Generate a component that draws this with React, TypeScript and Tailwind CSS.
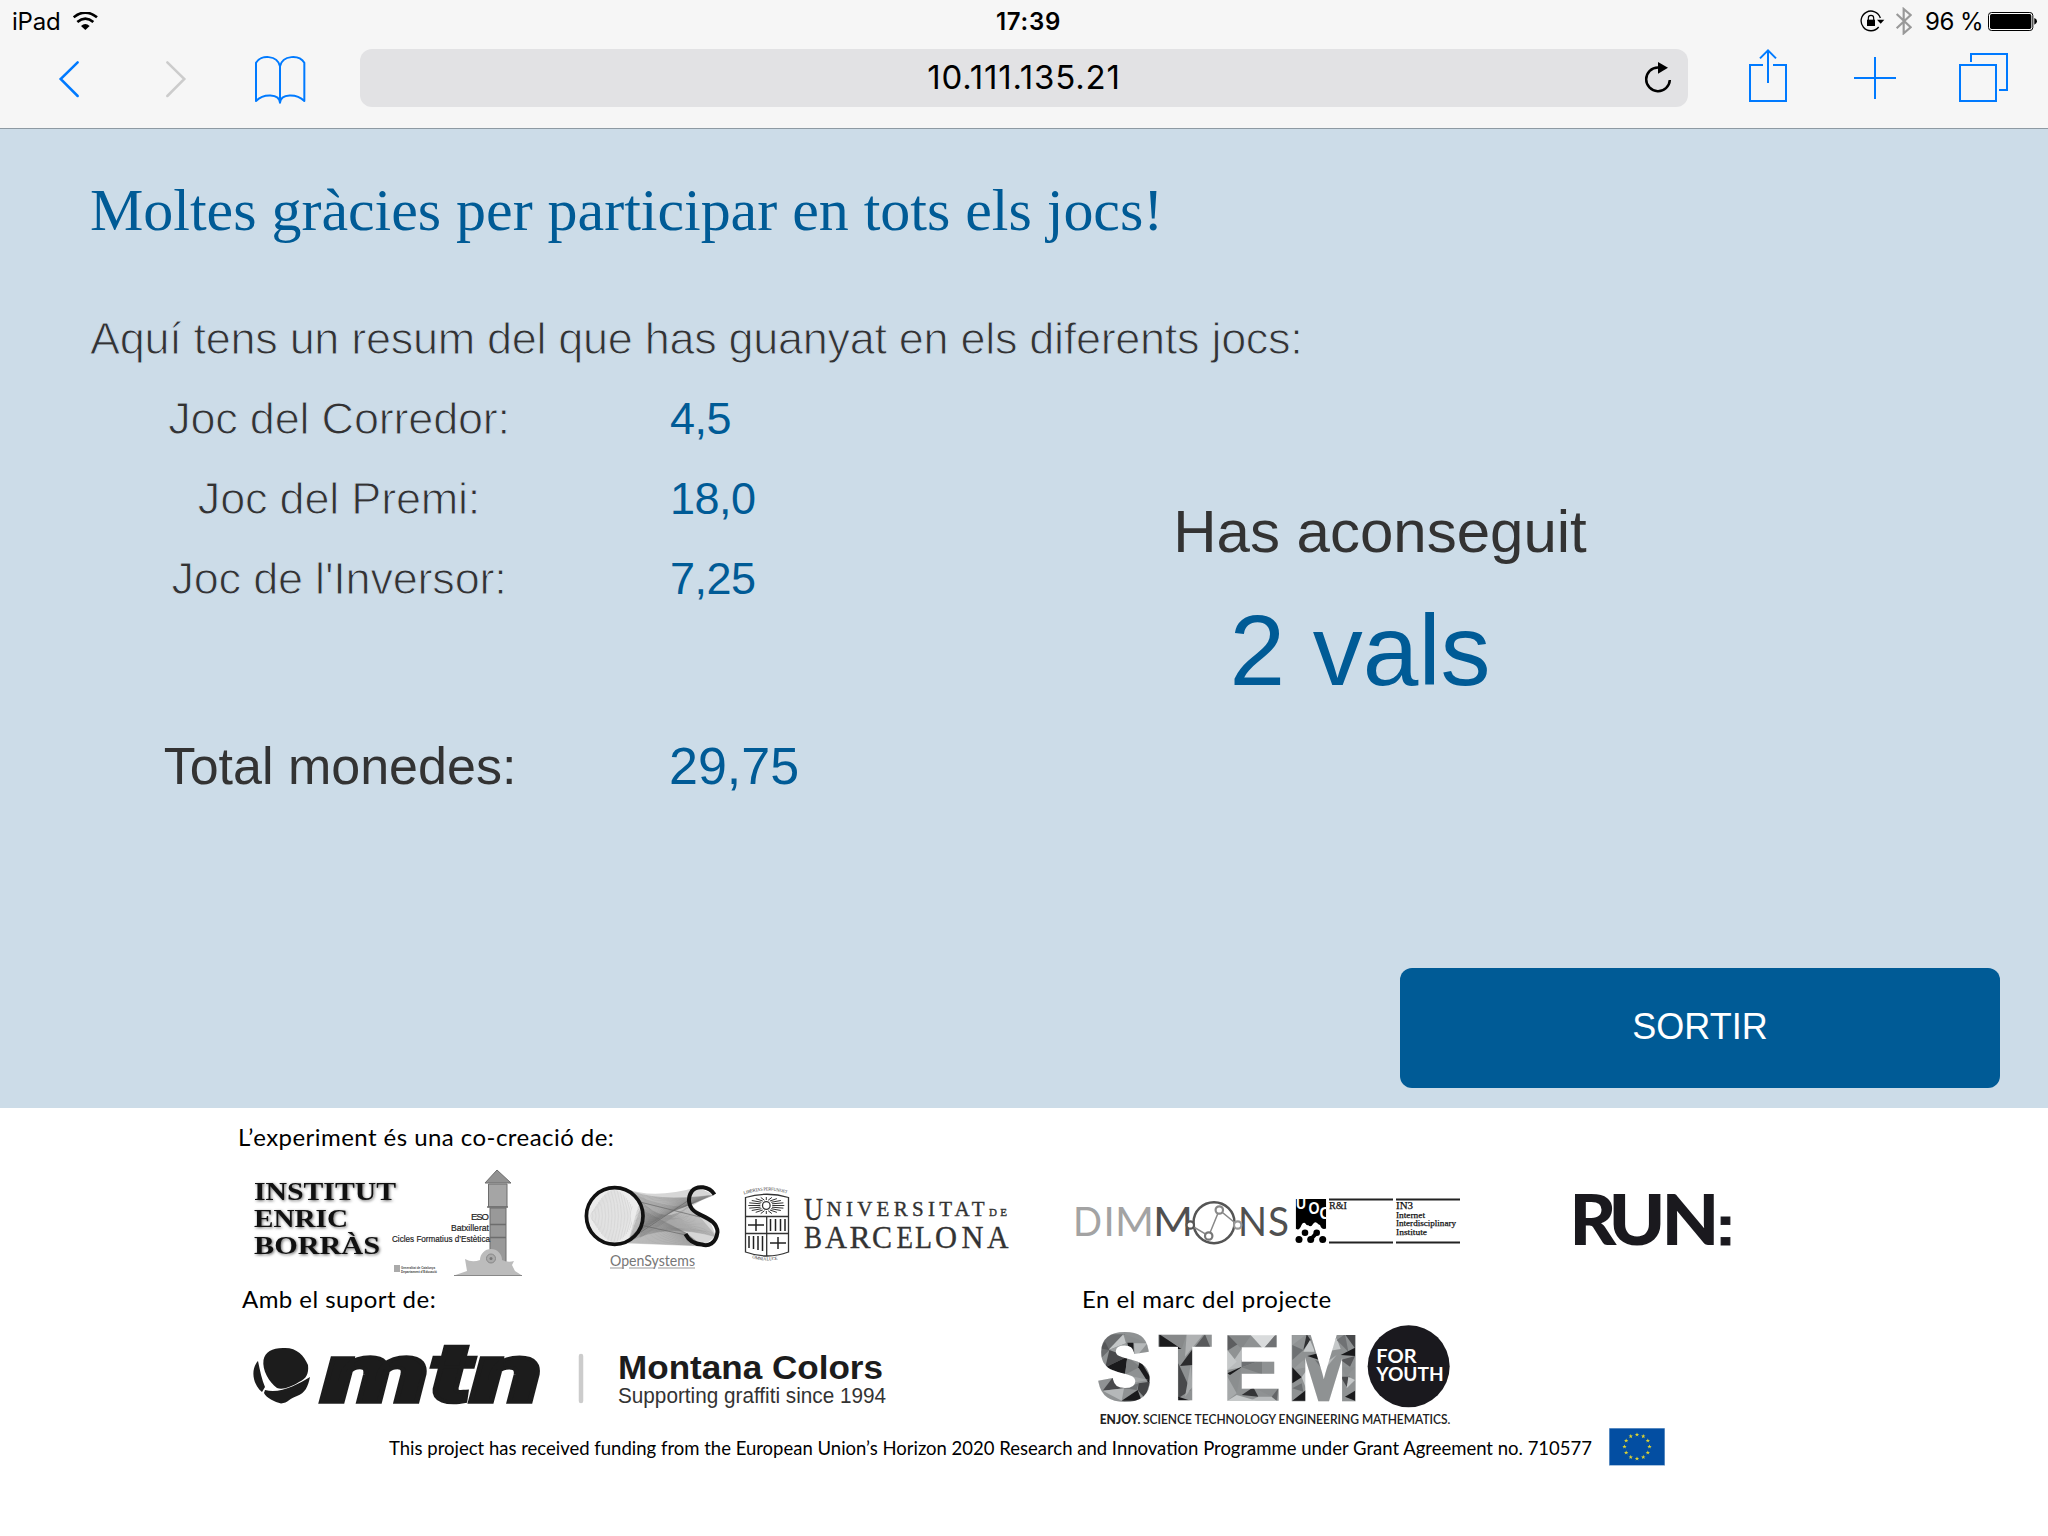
import React from "react";

const SANS = "font-['Liberation_Sans',sans-serif]";
const BLUE = "#007aff";

/* ---------- browser chrome ---------- */

function StatusBar() {
  return (
    <div className="grid h-10 grid-cols-3 items-center pl-3 pr-[11px] text-[24px] leading-10 text-black">
      <div className="flex items-center">
        <span className="w-[61px] pt-0.5 tracking-[-0.2px]">iPad</span>
        <svg className="h-[18px] w-[25px]" viewBox="217 33 75 54" fill="none" stroke="#000">
          <path d="M219 49 Q254 21 289 49" strokeWidth="8" />
          <path d="M230 63 Q254 43 278 63" strokeWidth="8" />
          <path d="M241 75 Q254 63 267 75 L254 87Z" fill="#000" stroke="none" />
        </svg>
      </div>
      <div className="pl-2 pt-0.5 text-center text-[24px] font-semibold tracking-[0.7px]">17:39</div>
      <div className="flex items-center justify-end">
        <svg className="h-[28px] w-[52px]" viewBox="780 19 156 84" fill="none">
          <path d="M841 52 A29.500 29.500 0 1 0 836 79" stroke="#000" strokeWidth="4" />
          <path d="M831 57 H853 L842 69Z" fill="#000" />
          <path d="M801 57h24v19h-24z" fill="#000" />
          <path d="M805 58v-6a8 8 0 0 1 16 0v6" stroke="#000" strokeWidth="3.500" />
          <path d="M890 40 L932 80 L911 98 V25 L932 43 L890 83" stroke="#999" strokeWidth="6.500" />
        </svg>
        <span className="ml-[13px] w-[63px] whitespace-nowrap pt-0.5 tracking-[-0.5px]">96 %</span>
        <svg className="h-[19px] w-[49px]" viewBox="1164 33 147 57">
          <rect x="1165.500" y="34.500" width="133" height="54" rx="9" fill="#fff" stroke="#000" strokeWidth="3" />
          <rect x="1170" y="39" width="124" height="45" rx="5" />
          <path d="M1303 51q8 2 8 10t-8 10z" />
        </svg>
      </div>
    </div>
  );
}

function Toolbar() {
  return (
    <div className="flex h-[88px] items-start pt-[7px]">
      <svg className="ml-[50px] h-16 w-[266px]" viewBox="150 141 798 192" fill="none" strokeLinecap="round" strokeLinejoin="miter">
        <path d="M233 187 L182 237 L233 288" stroke={BLUE} strokeWidth="7.500" />
        <path d="M502 187 L553 237 L502 288" stroke="#ccc" strokeWidth="7.500" />
        <path
          d="M840 308 C838 280 790 280 768 303 V188 C782 164 832 164 840 199 C848 164 898 164 913 188 V303 C890 280 842 280 840 308 V199"
          stroke={BLUE}
          strokeWidth="6"
          strokeLinejoin="round"
        />
      </svg>
      <div className="relative ml-11 mt-0.5 flex h-[58px] w-[1328px] items-center justify-center rounded-xl bg-[#e2e2e4]">
        <span className="text-[33px] tracking-[0.8px] text-black">10.111.135.21</span>
        <svg className="absolute right-[15px] top-[11px] h-[34px] w-[30px]" viewBox="129 180 90 102" fill="none">
          <path d="M209.500 240 A35.500 35.500 0 1 1 174 202.500" stroke="#000" strokeWidth="7.500" />
          <path d="M174 186 L204 203.500 L174 221Z" fill="#000" />
        </svg>
      </div>
      <svg className="ml-[58px] h-16 w-[266px]" viewBox="438 141 798 192" fill="none" stroke={BLUE} strokeWidth="6">
        <path d="M489 195H450V303H558V195H519M504 249V153M480 175L504 151L528 175" />
        <path d="M762 234H888M825 171V297" />
        <path d="M1080 195H1188V303H1080ZM1113 186V162H1221V270H1197" />
      </svg>
    </div>
  );
}

/* ---------- results ---------- */

const games = [
  { name: "Joc del Corredor:", value: "4,5" },
  { name: "Joc del Premi:", value: "18,0" },
  { name: "Joc de l'Inversor:", value: "7,25" },
];

function Results() {
  return (
    <main className={`flex h-[979px] flex-col bg-[#ccdce8] pt-[41px] text-[#333] ${SANS}`}>
      <h1 className="ml-[90px] font-['Liberation_Serif',serif] text-[60px] leading-[80px] tracking-[-0.03px] text-[#005b96]">
        Moltes gràcies per participar en tots els jocs!
      </h1>
      <p className="ml-[90px] mt-[49px] text-[45px] leading-[80px] tracking-[-0.3px] [-webkit-text-stroke:1px_#ccdce8]">
        Aquí tens un resum del que has guanyat en els diferents jocs:
      </p>
      <div className="flex">
        <div className="ml-[90px] w-[1040px]">
          {games.map((g) => (
            <div key={g.name} className="flex text-[45px] leading-[80px]">
              <span className="w-[498px] text-center tracking-[-0.2px] [-webkit-text-stroke:1px_#ccdce8]">{g.name}</span>
              <span className="ml-[82px] tracking-[-0.5px] text-[#005b96]">{g.value}</span>
            </div>
          ))}
          <div className="mt-[107px] flex text-[52px] leading-[80px]">
            <span className="w-[500px] text-center">Total monedes:</span>
            <span className="ml-[79px] text-[#005b96]">29,75</span>
          </div>
        </div>
        <div className="w-[500px] pt-[113px] text-center">
          <div className="text-[60px] leading-[80px]">Has aconseguit</div>
          <div className="mt-[18px] pr-[40px] text-[100px] leading-[120px] text-[#005b96]">2 vals</div>
        </div>
      </div>
      <button className="mb-5 ml-auto mr-12 mt-auto h-[120px] w-[600px] rounded-xl bg-[#005b96] pb-0.5 text-[36px] text-white">
        SORTIR
      </button>
    </main>
  );
}

/* ---------- logos ---------- */

function InstitutLogo() {
  return (
    <svg className="h-[118px] w-[285px]" viewBox="245 1162 285 118">
      <g className="font-['Liberation_Serif',serif] font-bold text-[25px] drop-shadow-[1.5px_1.5px_1.5px_rgba(0,0,0,0.6)]" fill="#111">
        <text x="254" y="1200" textLength="142" lengthAdjust="spacingAndGlyphs">INSTITUT</text>
        <text x="254" y="1227" textLength="94" lengthAdjust="spacingAndGlyphs">ENRIC</text>
        <text x="254" y="1254" textLength="126" lengthAdjust="spacingAndGlyphs">BORRÀS</text>
      </g>
      <g stroke="#6d6d6d" strokeWidth="1">
        <path d="M497 1170 L485 1183 H511Z" fill="#929292" />
        <path d="M488.500 1184H507V1207H488.500Z" fill="#a5a5a5" />
        <path d="M490 1208H506V1262H490Z" fill="#999" />
        <path d="M487 1207H508M490 1224.500H506M490 1237.500H506" strokeWidth="1.500" />
      </g>
      <path d="M454 1275.500 L467 1271 L465 1259 Q472 1263 480 1260 A11 11 0 0 1 502 1260 Q508 1263 514 1261 L512 1265 L515 1271 L522 1275.500Z" fill="#bcbcbc" />
      <path d="M454 1275.500H522" stroke="#888" />
      <circle cx="491" cy="1258.500" r="4.500" fill="#aaa" stroke="#888" />
      <circle cx="491" cy="1258.500" r="1.500" fill="#777" />
      <g className="font-['Liberation_Sans',sans-serif] text-[9.5px]" fill="#222" stroke="#222" strokeWidth="0.200">
        <text x="471" y="1220" textLength="18">ESO</text>
        <text x="451" y="1231" textLength="38" lengthAdjust="spacingAndGlyphs">Batxillerat</text>
        <text x="392" y="1242" textLength="98" lengthAdjust="spacingAndGlyphs">Cicles Formatius d’Estètica</text>
      </g>
      <path d="M394 1265h6v7h-6z" fill="#aaa" />
      <g className="font-['Liberation_Sans',sans-serif] text-[4px] font-bold" fill="#444">
        <text x="401" y="1269" textLength="34" lengthAdjust="spacingAndGlyphs">Generalitat de Catalunya</text>
        <text x="401" y="1273" textLength="36" lengthAdjust="spacingAndGlyphs">Departament d’Educació</text>
      </g>
    </svg>
  );
}

const threads = Array.from({ length: 34 }, (_, i) => i / 33);

function OpenSystemsLogo() {
  return (
    <svg className="h-[118px] w-[150px]" viewBox="580 1162 150 118" fill="none">
      <path d="M625 1188 Q652 1200 698 1187 L712 1194 L692 1206 L710 1221 L716 1236 L703 1246 L628 1243Z" fill="#d6d6d6" />
      <path d="M634 1194 L640 1238 L690 1207 Q660 1207 634 1194Z" fill="#aaa" opacity="0.500" />
      <circle cx="614.700" cy="1216" r="28" fill="#ececec" />
      <g stroke="#666" strokeWidth="0.250">
        {threads.map((t) => (
          <path key={t} d={`M${625 + 18 * Math.sin(Math.PI * t)} ${1189 + 53 * t} Q${655 + 8 * t} ${1203 + 10 * t} ${714 - 25 * t} ${1195 + 10 * t}`} />
        ))}
        {threads.map((t) => (
          <path key={t} d={`M${640 - 12 * t} ${1200 + 42 * t} Q${665} ${1228 - 6 * t} ${690 + 27 * t} ${1205 + 32 * t}`} />
        ))}
        {threads.map((t) => (
          <path key={t} d={`M${628 + 12 * t} ${1243 - 34 * t} L${703 - 17 * t} ${1246 - 13 * t}`} />
        ))}
      </g>
      <g stroke="#c4c4c4" strokeWidth="0.500">
        {threads.slice(2, 30).map((t) => (
          <path key={t} d={`M${590 + 48 * t} ${1216 - 26 * Math.sin(Math.PI * t)} Q${586 + 48 * t} 1216 ${590 + 48 * t} ${1216 + 26 * Math.sin(Math.PI * t)}`} />
        ))}
      </g>
      <path d="M641 1232 L689 1200 M640 1202 L700 1217 M640 1225 L686 1235" stroke="#666" strokeWidth="1" opacity="0.700" />
      <circle cx="614.700" cy="1216" r="28.300" stroke="#111" strokeWidth="3.700" />
      <path d="M714.500 1194.500 C709 1186 697 1185 692 1191 C687 1198 688 1208 697 1213 C706 1218 717 1221 717.500 1232 C716 1244 708 1246.500 702 1244.500 C693 1244 688 1239 685.500 1234" stroke="#111" strokeWidth="4" />
      <text x="610" y="1266" textLength="85" lengthAdjust="spacingAndGlyphs" className="font-['Lato',sans-serif] text-[15px]" fill="#777">
        OpenSystems
      </text>
      <path d="M610 1268H624M629 1268H654M658 1268H695" stroke="#999" strokeWidth="1" />
    </svg>
  );
}

const rays = Array.from({ length: 20 }, (_, i) => (i * Math.PI) / 10);

function UbLogo() {
  return (
    <svg className="h-[118px] w-[275px]" viewBox="738 1162 275 118">
      <defs>
        <path id="motto-top" d="M744 1194.500 Q767 1186.500 790 1194.500" />
        <path id="motto-bottom" d="M752 1258 Q767 1263 783 1258" />
      </defs>
      <g className="font-['Liberation_Serif',serif] text-[4.5px]" fill="#333">
        <text textLength="44"><textPath href="#motto-top">LIBERTAS PERFUNDET</textPath></text>
        <text textLength="26"><textPath href="#motto-bottom">OMNIA LUCE</textPath></text>
      </g>
      <path d="M745.500 1196.500 Q767 1190 788.500 1196.500 V1251 Q767 1259 745.500 1251Z" fill="none" stroke="#333" strokeWidth="1.300" transform="translate(0 1)" />
      <path d="M745 1216.500H789M745 1233.500H789M766.700 1216.500V1256" stroke="#333" strokeWidth="1.300" />
      <circle cx="766.300" cy="1205.500" r="3.800" fill="none" stroke="#333" strokeWidth="1.300" />
      <g stroke="#333" strokeWidth="1">
        {rays.map((a) => (
          <path
            key={a}
            d={`M${766.3 + 6 * Math.cos(a)} ${1205.5 + 5.5 * Math.sin(a)} L${766.3 + 18 * Math.cos(a)} ${1205.5 + 8.5 * Math.sin(a)}`}
          />
        ))}
      </g>
      <g stroke="#222" strokeWidth="1.500">
        <path d="M748 1225H764M756 1219V1231M770 1243H786M778 1237V1249" />
        <path d="M770.500 1219V1231M775.500 1219V1231M780.500 1219V1231M785 1219V1231M749 1236V1248M753.500 1236V1249M758 1236V1250M762.500 1236V1251" />
      </g>
      <g className="font-['Liberation_Serif',serif]" fill="#333" stroke="#333" strokeWidth="0.350">
        <text x="804" y="1219.500" className="text-[31px]" textLength="19" lengthAdjust="spacingAndGlyphs">U</text>
        <text x="826.500" y="1215.700" className="text-[21px]" textLength="158">NIVERSITAT</text>
        <text x="989" y="1215.700" className="text-[11px]" textLength="18">DE</text>
        {Array.from("BARCELONA").map((c, i) => (
          <text
            key={i}
            x={[804, 825, 849.5, 872, 896.5, 915, 935, 961.5, 987][i]}
            y="1247.700"
            className="text-[32px]"
            textLength={[18, 22, 21, 20, 16.5, 17, 22, 22, 21.5][i]}
            lengthAdjust="spacingAndGlyphs"
          >
            {c}
          </text>
        ))}
      </g>
    </svg>
  );
}

function DimmonsLogo() {
  return (
    <svg className="h-[118px] w-[400px]" viewBox="1068 1162 400 118">
      <g className="font-['Lato',sans-serif] text-[40px]">
        <g fill="#a3a3a3">
          <text x="1073" y="1235.500" textLength="29" lengthAdjust="spacingAndGlyphs">D</text>
          <text x="1103.500" y="1235.500">I</text>
          <text x="1115" y="1235.500" textLength="39" lengthAdjust="spacingAndGlyphs">M</text>
        </g>
        <g fill="#505050">
          <text x="1153" y="1235.500" textLength="40" lengthAdjust="spacingAndGlyphs">M</text>
          <text x="1238" y="1235.500" textLength="29" lengthAdjust="spacingAndGlyphs">N</text>
          <text x="1268" y="1235.500" textLength="21" lengthAdjust="spacingAndGlyphs">S</text>
        </g>
      </g>
      <circle cx="1214" cy="1222.700" r="20.500" fill="#fff" stroke="#555" strokeWidth="2.500" />
      <path d="M1190.300 1225L1208.700 1236L1219.300 1210L1237.700 1225" fill="none" stroke="#888" strokeWidth="1.500" />
      <g fill="#fff" strokeWidth="2.200">
        <circle cx="1190.300" cy="1225" r="3.700" stroke="#555" />
        <circle cx="1208.700" cy="1236" r="3.700" stroke="#777" />
        <circle cx="1219.300" cy="1210" r="3.700" stroke="#888" />
        <circle cx="1237.700" cy="1225" r="3.700" stroke="#999" />
      </g>
      <clipPath id="uoc-clip"><path d="M1295.700 1199H1326.200V1230H1295.700Z" /></clipPath>
      <g clipPath="url(#uoc-clip)">
        <path d="M1295.700 1199H1326.200V1230H1295.700Z" />
        <g fill="#fff" className="font-['Liberation_Sans',sans-serif] text-[17px] font-bold">
          <text x="1296" y="1209" textLength="10" lengthAdjust="spacingAndGlyphs">U</text>
          <text x="1308.500" y="1213.500" textLength="11" lengthAdjust="spacingAndGlyphs">O</text>
          <text x="1319.500" y="1218.500" textLength="11" lengthAdjust="spacingAndGlyphs">C</text>
        </g>
        <path d="M1295 1228q4 4 6.500-3q1.500-3 3.500-2q2 3 3 2q3 3 5-1q2-3 4-1q2 2 3 2q2 6 7 3V1232H1295Z" fill="#fff" />
      </g>
      <g>
        <circle cx="1299" cy="1239.500" r="3.500" />
        <circle cx="1310.700" cy="1239.500" r="3.500" />
        <circle cx="1322.700" cy="1239.500" r="3.500" />
        <circle cx="1305" cy="1232.800" r="3.300" />
        <circle cx="1316.700" cy="1232.800" r="3.300" />
        <path d="M1311 1239L1316.700 1232.800" stroke="#000" strokeWidth="4" />
      </g>
      <path d="M1329 1199.500H1393M1396 1199.500H1460M1329 1242.500H1393M1396 1242.500H1460" stroke="#222" strokeWidth="1.800" />
      <g className="font-['Liberation_Serif',serif] text-[8.8px]" fill="#111" stroke="#111" strokeWidth="0.250">
        <text x="1329" y="1209.300" className="text-[10.5px]" textLength="18" lengthAdjust="spacingAndGlyphs">R&amp;I</text>
        <text x="1396" y="1209.300" className="text-[10.5px]" textLength="17" lengthAdjust="spacingAndGlyphs">IN3</text>
        <text x="1396" y="1218" textLength="29" lengthAdjust="spacingAndGlyphs">Internet</text>
        <text x="1396" y="1226.300" textLength="60" lengthAdjust="spacingAndGlyphs">Interdisciplinary</text>
        <text x="1396" y="1234.700" textLength="31" lengthAdjust="spacingAndGlyphs">Institute</text>
      </g>
    </svg>
  );
}

function RunLogo() {
  return (
    <svg className="h-[118px] w-[175px]" viewBox="1565 1162 175 118" fill="#1a191e">
      <g className="font-['Lato',sans-serif] text-[71px] font-black">
        <text x="1569.500" y="1245" textLength="47" lengthAdjust="spacingAndGlyphs">R</text>
        <text x="1608.500" y="1245" textLength="57" lengthAdjust="spacingAndGlyphs">U</text>
        <text x="1661.500" y="1245" textLength="58" lengthAdjust="spacingAndGlyphs">N</text>
      </g>
      <text x="1715" y="1244.500" textLength="21" lengthAdjust="spacingAndGlyphs" stroke="#1a191e" strokeWidth="0.800" className="font-['Liberation_Sans',sans-serif] text-[56px] font-bold">:</text>
    </svg>
  );
}

function MtnLogo() {
  return (
    <svg className="h-[110px] w-[650px]" viewBox="245 1320 650 110" fill="#1c1c1c">
      <path d="M283 1348 C296 1347 304 1355 308 1365 C309 1374 306 1379 299 1382 C291 1387 283 1390 277 1388 C269 1382 262 1370 263.500 1360 C265 1352 272 1348 283 1348Z" />
      <path d="M258 1361 C260 1371 262 1380 265 1387 L262 1392 C254 1386 250 1372 257 1362Z" />
      <path d="M265 1390 C280 1394 297 1385 310 1377 C308 1387 305 1393 297 1396 C290 1398 288 1403 281 1403.500 C275 1402 266 1398 264 1393Z" />
      <text x="322" y="1401.500" textLength="220" lengthAdjust="spacingAndGlyphs" className="font-['Roboto',sans-serif] text-[84px] font-black italic" stroke="#1c1c1c" strokeWidth="3.500">
        mtn
      </text>
      <path d="M581 1356V1401" stroke="#ccc" strokeWidth="4.500" strokeLinecap="round" />
      <g className="font-['Liberation_Sans',sans-serif]">
        <text x="618" y="1378.500" textLength="265" lengthAdjust="spacingAndGlyphs" className="text-[34px] font-bold">Montana Colors</text>
        <text x="618" y="1402.500" textLength="268" lengthAdjust="spacingAndGlyphs" className="text-[21.5px]" fill="#333">Supporting graffiti since 1994</text>
      </g>
    </svg>
  );
}

const facets: [string, string][] = [
  ["#6a6c6e", "88,163 165,163 118,210 88,240"],
  ["#c3c6c7", "160,163 168,190 115,210"],
  ["#555658", "118,210 88,205 105,185"],
  ["#8b8e8f", "165,163 232,190 168,188"],
  ["#1a1a1c", "172,188 190,188 192,236 183,232"],
  ["#b5b8b9", "192,190 232,190 195,235"],
  ["#9a9d9e", "118,210 168,190 172,230"],
  ["#48494b", "118,210 172,230 106,262"],
  ["#1a1a1c", "172,230 106,262 165,284"],
  ["#7d8081", "172,230 210,260 165,284"],
  ["#1a1a1c", "210,240 240,290 236,310 205,262"],
  ["#a2a5a6", "165,284 236,300 180,310"],
  ["#6d7072", "130,284 165,284 162,325"],
  ["#48494b", "130,290 98,332 162,325"],
  ["#b5b8b9", "98,332 162,325 155,362"],
  ["#6d7072", "162,325 206,310 200,330"],
  ["#1a1a1c", "155,362 203,330 215,362"],
  ["#444547", "206,310 240,305 225,355 203,330"],
  ["#1a1a1c", "268,163 275,163 335,207 268,207"],
  ["#87898a", "268,163 350,163 335,207"],
  ["#b0b2b3", "350,163 400,163 345,230"],
  ["#58595b", "405,163 423,207 370,207"],
  ["#2b2b2d", "368,207 368,255 330,258"],
  ["#8d9091", "325,258 368,258 350,315"],
  ["#48494b", "325,250 362,330 325,355"],
  ["#a6a9aa", "362,255 368,320 345,350"],
  ["#1a1a1c", "325,350 362,362 325,362"],
  ["#5d5e60", "472,163 515,185 472,212"],
  ["#858889", "472,163 545,163 515,207"],
  ["#d9dbdc", "540,163 618,163 580,207"],
  ["#707274", "618,163 618,207 580,207"],
  ["#b9bcbd", "515,207 515,262 472,270"],
  ["#c5c8c9", "472,210 500,245 472,270"],
  ["#1a1a1c", "472,280 515,260 490,292"],
  ["#6d7072", "515,240 576,240 515,262"],
  ["#7b7e7f", "515,262 576,283 576,240"],
  ["#8b8e8f", "515,262 500,340 472,290"],
  ["#a6a9aa", "472,290 500,340 472,362"],
  ["#c5c8c9", "500,345 560,362 472,362"],
  ["#333436", "515,345 550,322 565,350"],
  ["#8b8e8f", "550,322 625,322 605,350"],
  ["#b9bcbd", "565,350 605,350 620,362 540,362"],
  ["#636567", "605,350 625,325 620,362"],
  ["#9a9d9e", "667,163 710,163 667,195"],
  ["#2f3032", "710,163 722,180 700,210"],
  ["#6d7072", "667,195 700,210 667,240"],
  ["#c5c8c9", "720,180 735,215 700,215"],
  ["#8b8e8f", "730,190 762,215 735,230"],
  ["#1a1a1c", "712,228 762,215 755,242"],
  ["#c5c8c9", "762,215 800,175 812,207"],
  ["#1a1a1c", "762,215 778,225 765,250"],
  ["#6d7072", "735,240 765,250 760,273"],
  ["#b5b8b9", "765,250 800,225 760,273"],
  ["#707274", "800,180 825,163 835,215"],
  ["#48494b", "825,163 855,163 855,205"],
  ["#1a1a1c", "812,225 855,203 855,228"],
  ["#9a9d9e", "667,270 700,240 710,262"],
  ["#1a1a1c", "667,262 695,292 667,310"],
  ["#c5c8c9", "695,292 710,270 710,330"],
  ["#6d7072", "667,325 695,310 700,335"],
  ["#1a1a1c", "667,362 708,330 710,362"],
  ["#58595b", "812,240 855,228 840,260"],
  ["#8b8e8f", "812,262 855,262 830,290"],
  ["#48494b", "812,290 840,290 830,320"],
  ["#c5c8c9", "835,290 855,300 830,325"],
  ["#1a1a1c", "825,350 855,332 855,362"],
];

function StemLogo() {
  return (
    <svg className="h-[108px] w-[375px]" viewBox="75 120 1125 324">
      <mask id="stem-letters" maskUnits="userSpaceOnUse" x="75" y="150" width="800" height="225">
        <g className="font-['Liberation_Sans',sans-serif] text-[280px] font-bold" fill="#fff" stroke="#fff">
          <text x="84" y="356" strokeWidth="12" textLength="160" lengthAdjust="spacingAndGlyphs">S</text>
          <text x="265" y="359" strokeWidth="5" textLength="161" lengthAdjust="spacingAndGlyphs">T</text>
          <text x="457" y="359" strokeWidth="5" textLength="177" lengthAdjust="spacingAndGlyphs">E</text>
          <text x="651" y="359" strokeWidth="7" textLength="220" lengthAdjust="spacingAndGlyphs">M</text>
        </g>
      </mask>
      <g mask="url(#stem-letters)">
        <rect x="75" y="150" width="800" height="225" fill="#8f9293" />
        {facets.map(([fill, points]) => (
          <polygon key={points} points={points} fill={fill} />
        ))}
      </g>
      <circle cx="1016" cy="259" r="123" fill="#1a191e" />
      <g className="font-['Lato',sans-serif] text-[54px] font-bold" fill="#fff">
        <text x="919" y="248" textLength="121" lengthAdjust="spacingAndGlyphs">FOR</text>
        <text x="919" y="302" textLength="202" lengthAdjust="spacingAndGlyphs">YOUTH</text>
      </g>
      <g className="font-['Lato',sans-serif] text-[37px]" fill="#222">
        <text x="89" y="431" textLength="122" lengthAdjust="spacingAndGlyphs" className="font-black">ENJOY.</text>
        <text x="219" y="431" textLength="922" lengthAdjust="spacingAndGlyphs" className="font-semibold">
          SCIENCE TECHNOLOGY ENGINEERING MATHEMATICS.
        </text>
      </g>
    </svg>
  );
}

const STAR = "M0-2.300L.6-.7 2.200-.7.9.3 1.400 1.900 0 .9-1.400 1.900-.9.3-2.200-.7-.6-.7Z";
const starAngles = Array.from({ length: 12 }, (_, i) => (i * Math.PI) / 6);

function EuFlag() {
  return (
    <svg className="h-[38px] w-[56px]" viewBox="0 0 56 38">
      <rect width="56" height="38" fill="#a9c3de" />
      <rect x="0.500" y="0.500" width="55" height="36.500" fill="#034ea2" />
      {starAngles.map((a) => (
        <path key={a} d={STAR} fill="#dfd431" transform={`translate(${28 + 12.5 * Math.sin(a)} ${18.7 - 12 * Math.cos(a)})`} />
      ))}
    </svg>
  );
}

function Footer() {
  return (
    <footer className="h-[428px] bg-white font-['Lato',sans-serif] text-[24px] tracking-[0.45px] text-black">
      <p className="ml-[238px] h-[54px] leading-[57px]">L’experiment és una co-creació de:</p>
      <div className="ml-[245px] flex tracking-normal">
        <InstitutLogo />
        <div className="ml-[50px]"><OpenSystemsLogo /></div>
        <div className="ml-2"><UbLogo /></div>
        <div className="ml-[55px]"><DimmonsLogo /></div>
        <div className="ml-[97px]"><RunLogo /></div>
      </div>
      <div className="ml-[242px] flex h-10 leading-[37px]">
        <p className="w-[840px]">Amb el suport de:</p>
        <p>En el marc del projecte</p>
      </div>
      <div className="ml-[245px] flex h-[108px] tracking-normal">
        <MtnLogo />
        <div className="ml-[200px]"><StemLogo /></div>
      </div>
      <div className="ml-[389px] flex h-[40px] items-start tracking-normal">
        <p className="w-[1220px] whitespace-nowrap text-[18.5px] leading-[40px]">
          This project has received funding from the European Union’s Horizon 2020 Research and Innovation Programme under Grant
          Agreement no. 710577
        </p>
        <EuFlag />
      </div>
    </footer>
  );
}

export default function App() {
  return (
    <div className="h-[1536px] w-[2048px] overflow-hidden bg-white">
      <header className="h-[129px] border-b border-[#8e9aa3] bg-[#f6f6f6] font-['Inter',sans-serif]">
        <StatusBar />
        <Toolbar />
      </header>
      <Results />
      <Footer />
    </div>
  );
}
